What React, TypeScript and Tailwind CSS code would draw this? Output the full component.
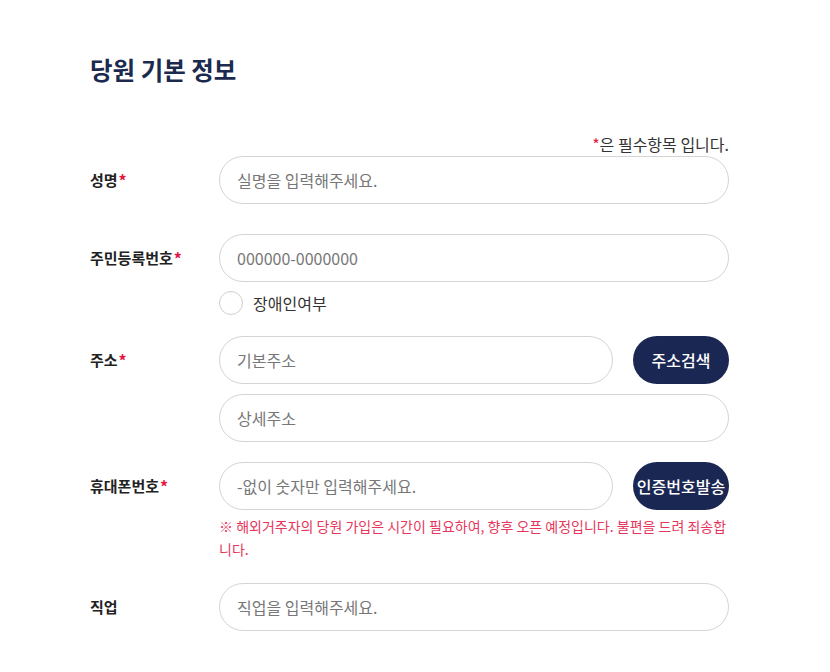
const FONT = "font-['Noto_Sans_CJK_KR','Noto_Sans',sans-serif]";

function Label({ text, required }: { text: string; required?: boolean }) {
  return (
    <div className="w-[129px] shrink-0 h-12 flex items-center text-[15px] font-bold text-[#222]">
      {text}
      {required && <span className="text-[#e5173f] text-[16px] ml-[1px]">*</span>}
    </div>
  );
}

function Input({ placeholder, className = "" }: { placeholder: string; className?: string }) {
  return (
    <input
      className={`h-12 rounded-full border border-[#d4d4d4] bg-white px-[17px] text-[16px] text-[#333] placeholder:text-[#777] outline-none ${className}`}
      placeholder={placeholder}
    />
  );
}

function NavyButton({ text }: { text: string }) {
  return (
    <button className="h-12 w-24 shrink-0 rounded-full bg-[#1b2753] text-white text-[16px] font-medium whitespace-nowrap">
      {text}
    </button>
  );
}

export default function App() {
  return (
    <div className={`${FONT} bg-white min-h-[672px] w-[830px]`}>
      <div className="ml-[90px] w-[639px] pt-[53px]">
        <h2 className="text-[24.5px] leading-[34px] font-bold text-[#1b2a4e]">당원 기본 정보</h2>

        <div className="mt-[47px] text-right text-[16px] leading-[20px] text-[#333]">
          <span className="text-[#e5173f]">*</span>은 필수항목 입니다.
        </div>

        {/* 성명 */}
        <div className="flex mt-[2px]">
          <Label text="성명" required />
          <Input placeholder="실명을 입력해주세요." className="flex-1" />
        </div>

        {/* 주민등록번호 */}
        <div className="flex mt-[30px]">
          <Label text="주민등록번호" required />
          <div className="flex-1">
            <Input placeholder="000000-0000000" className="w-full" />
            <label className="mt-[9px] flex items-center gap-[10px] text-[16px] text-[#333]">
              <span className="w-6 h-6 rounded-full border border-[#cfcfcf] bg-white" />
              장애인여부
            </label>
          </div>
        </div>

        {/* 주소 */}
        <div className="flex mt-[21px]">
          <Label text="주소" required />
          <div className="flex-1 flex flex-col gap-[10px]">
            <div className="flex gap-5">
              <Input placeholder="기본주소" className="flex-1" />
              <NavyButton text="주소검색" />
            </div>
            <Input placeholder="상세주소" className="w-full" />
          </div>
        </div>

        {/* 휴대폰번호 */}
        <div className="flex mt-5">
          <Label text="휴대폰번호" required />
          <div className="flex-1">
            <div className="flex gap-5">
              <Input placeholder="-없이 숫자만 입력해주세요." className="flex-1" />
              <NavyButton text="인증번호발송" />
            </div>
            <p className="mt-[5px] text-[14px] leading-[23px] text-[#e5375b]">
              ※ 해외거주자의 당원 가입은 시간이 필요하여, 향후 오픈 예정입니다. 불편을 드려 죄송합니다.
            </p>
          </div>
        </div>

        {/* 직업 */}
        <div className="flex mt-[22px]">
          <Label text="직업" />
          <Input placeholder="직업을 입력해주세요." className="flex-1" />
        </div>
      </div>
    </div>
  );
}
